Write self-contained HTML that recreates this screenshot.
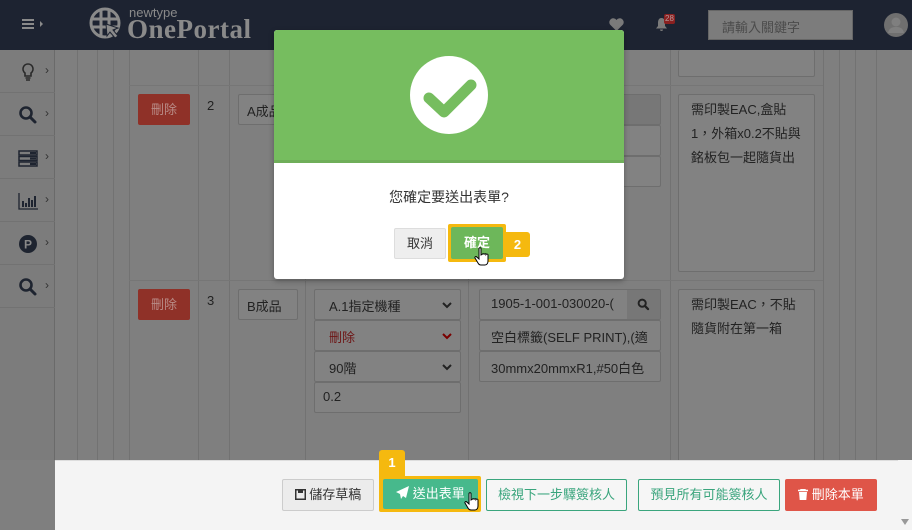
<!DOCTYPE html><html><head><meta charset="utf-8"><style>
*{box-sizing:border-box;margin:0;padding:0}
body{width:912px;height:530px;overflow:hidden;background:#7f7f7f;font-family:"Liberation Sans","Noto Sans CJK TC",sans-serif;font-size:13px;color:#222;position:relative}
.a{position:absolute}
.hdr{left:0;top:0;width:912px;height:50px;background:#1d2331}
.vl{position:absolute;top:50px;height:410px;width:1px;background:#727272}
.hl{position:absolute;height:1px;background:#767676}
.box{position:absolute;border:1px solid #6e6e6e;background:#828282;border-radius:2px;color:#222;padding:6px 8px;white-space:nowrap;overflow:hidden;font-size:13px}
.red{position:absolute;background:#8f3128;color:#b98c87;border-radius:2px;text-align:center;line-height:31px;font-size:13px}
.side{position:absolute;left:0;width:55px;height:43px;border-bottom:1px solid #727272}
.side svg{position:absolute;left:18px;top:12px}
.side .ch{position:absolute;left:45px;top:13px;color:#333;font-size:12px}
.btn{position:absolute;border-radius:2px;text-align:center;font-size:13px}
.cv{position:absolute;right:8px;top:11px}
</style></head><body>
<div class="a hdr"></div>
<div class="a" style="left:22px;top:19px;width:12px;height:2px;background:#8a8a8a;box-shadow:0 4px #8a8a8a,0 8px #8a8a8a"></div>
<div class="a" style="left:40px;top:21px;border-left:3px solid #8a8a8a;border-top:3px solid transparent;border-bottom:3px solid transparent"></div>
<svg class="a" style="left:89px;top:7px" width="36" height="36" viewBox="0 0 36 36"><circle cx="16" cy="16" r="14" fill="none" stroke="#8a8a8a" stroke-width="3"/><path d="M2 12h28M2 20h28M12 3v26M20 3v26" stroke="#8a8a8a" stroke-width="3"/><path d="M17 17l12 4-5 2 5 6-3 2-5-6-3 4z" fill="#8a8a8a" stroke="#1d2331" stroke-width="1"/></svg>
<div class="a" style="left:129px;top:5px;color:#8a8a8a;font-size:13px">newtype</div>
<div class="a" style="left:127px;top:14px;color:#8a8a8a;font-size:27px;font-weight:bold;font-family:'Liberation Serif',serif;letter-spacing:0.5px">OnePortal</div>
<svg class="a" style="left:609px;top:18px" width="15" height="13" viewBox="0 0 15 13"><path d="M7.5 13L1 6.5A3.6 3.6 0 0 1 7.5 2a3.6 3.6 0 0 1 6.5 4.5z" fill="#7a7a7a"/></svg>
<svg class="a" style="left:655px;top:17px" width="13" height="15" viewBox="0 0 13 15"><path d="M6.5 1C3.5 1 3 4 3 6v3L1 11.5h11L10 9V6c0-2-.5-5-3.5-5zM5 12.5a1.5 1.5 0 0 0 3 0z" fill="#7a7a7a"/></svg>
<div class="a" style="left:664px;top:14px;background:#8a2020;color:#b89a9a;font-size:8px;padding:0 1px;border-radius:2px;line-height:10px">28</div>
<div class="a" style="left:708px;top:10px;width:145px;height:30px;background:#7c7c7c;border:1px solid #666;color:#4b4b4b;padding:6px 13px;font-size:13px">請輸入關鍵字</div>
<svg class="a" style="left:884px;top:13px" width="24" height="24" viewBox="0 0 24 24"><circle cx="12" cy="12" r="12" fill="#6f6f6f"/><circle cx="12" cy="9" r="4.5" fill="#7f7f7f"/><path d="M4 20c1-5 4-6 8-6s7 1 8 6z" fill="#7f7f7f"/></svg>
<div class="a" style="left:0;top:50px;width:55px;height:410px;background:#7c7c7c;border-right:1px solid #6a6a6a"></div>
<div class="side" style="top:50px"><svg width="20" height="20" viewBox="0 0 20 20"><path d="M10 2a5 5 0 0 0-3 9v3h6v-3a5 5 0 0 0-3-9z" fill="none" stroke="#2a2a2a" stroke-width="1.6"/><path d="M7.5 16h5M8 18h4" stroke="#2a2a2a" stroke-width="1.6"/></svg><span class="ch">›</span></div>
<div class="side" style="top:93px"><svg width="20" height="20" viewBox="0 0 20 20"><circle cx="8" cy="8" r="5.5" fill="none" stroke="#1e2430" stroke-width="2.6"/><path d="M12 12l5 5" stroke="#1e2430" stroke-width="3" stroke-linecap="round"/></svg><span class="ch">›</span></div>
<div class="side" style="top:136px"><svg width="20" height="20" viewBox="0 0 20 20"><rect x="1" y="3" width="18" height="4" fill="none" stroke="#1e2430" stroke-width="1.5"/><rect x="1" y="8.5" width="18" height="4" fill="none" stroke="#1e2430" stroke-width="1.5"/><rect x="1" y="14" width="18" height="4" fill="none" stroke="#1e2430" stroke-width="1.5"/><path d="M12 5h6M12 10.5h6M12 16h6" stroke="#1e2430" stroke-width="2"/></svg><span class="ch">›</span></div>
<div class="side" style="top:179px"><svg width="20" height="20" viewBox="0 0 20 20"><path d="M1 2v16h19" fill="none" stroke="#1e2430" stroke-width="1.3"/><path d="M5 10v6M8 12v4M11 7v9M14 9v7M17 5v11" stroke="#1e2430" stroke-width="2"/></svg><span class="ch">›</span></div>
<div class="side" style="top:222px"><svg width="20" height="20" viewBox="0 0 20 20"><circle cx="10" cy="10" r="9" fill="#1e2430"/><text x="10" y="14.5" font-size="12" font-weight="bold" fill="#888" text-anchor="middle" font-family="Liberation Sans">P</text></svg><span class="ch">›</span></div>
<div class="side" style="top:265px"><svg width="20" height="20" viewBox="0 0 20 20"><circle cx="8" cy="8" r="5.5" fill="none" stroke="#1e2430" stroke-width="2.6"/><path d="M12 12l5 5" stroke="#1e2430" stroke-width="3" stroke-linecap="round"/></svg><span class="ch">›</span></div>
<div class="vl" style="left:77px"></div><div class="vl" style="left:97px"></div><div class="vl" style="left:113px"></div><div class="vl" style="left:129px"></div><div class="vl" style="left:198px"></div><div class="vl" style="left:229px"></div><div class="vl" style="left:305px"></div><div class="vl" style="left:468px"></div><div class="vl" style="left:670px"></div><div class="vl" style="left:823px"></div><div class="vl" style="left:839px"></div><div class="vl" style="left:855px"></div><div class="vl" style="left:876px"></div>
<div class="hl" style="left:129px;top:85px;width:694px"></div>
<div class="hl" style="left:129px;top:280px;width:694px"></div>
<div class="box" style="left:678px;top:50px;width:137px;height:27px;border-top:none"></div>
<div class="red" style="left:138px;top:94px;width:52px;height:31px">刪除</div>
<div class="a" style="left:207px;top:98px;font-size:13px;color:#222">2</div>
<div class="box" style="left:238px;top:94px;width:60px;height:31px">A成品</div>
<div class="box" style="left:479px;top:94px;width:182px;height:31px;background:#777"></div>
<div class="box" style="left:479px;top:125px;width:182px;height:31px"></div>
<div class="box" style="left:479px;top:156px;width:182px;height:31px"></div>
<div class="box" style="left:678px;top:94px;width:137px;height:178px;white-space:normal;line-height:24px;padding:3px 12px">需印製EAC,盒貼1，外箱x0.2不貼與銘板包一起隨貨出</div>
<div class="red" style="left:138px;top:289px;width:52px;height:31px">刪除</div>
<div class="a" style="left:207px;top:293px;color:#222">3</div>
<div class="box" style="left:238px;top:289px;width:60px;height:31px">B成品</div>
<div class="box" style="left:314px;top:289px;width:147px;height:31px;padding-left:14px">A.1指定機種<svg class="cv" width="10" height="8"><path d="M1 2l4 4 4-4" fill="none" stroke="#222" stroke-width="2"/></svg></div>
<div class="box" style="left:314px;top:320px;width:147px;height:31px;padding-left:14px;color:#6e1515">刪除<svg class="cv" width="10" height="8"><path d="M1 2l4 4 4-4" fill="none" stroke="#7a0000" stroke-width="2"/></svg></div>
<div class="box" style="left:314px;top:351px;width:147px;height:31px;padding-left:14px">90階<svg class="cv" width="10" height="8"><path d="M1 2l4 4 4-4" fill="none" stroke="#222" stroke-width="2"/></svg></div>
<div class="box" style="left:314px;top:382px;width:147px;height:31px">0.2</div>
<div class="box" style="left:479px;top:289px;width:182px;height:31px;padding-left:11px">1905-1-001-030020-(<span class="a" style="right:0;top:0;width:33px;height:31px;background:#777"><svg class="a" style="left:10px;top:8px" width="13" height="13" viewBox="0 0 20 20"><circle cx="8" cy="8" r="5.5" fill="none" stroke="#222" stroke-width="3"/><path d="M12 12l5 5" stroke="#222" stroke-width="3.5" stroke-linecap="round"/></svg></span></div>
<div class="box" style="left:479px;top:320px;width:182px;height:31px;padding-left:11px">空白標籤(SELF PRINT),(適</div>
<div class="box" style="left:479px;top:351px;width:182px;height:31px;padding-left:11px">30mmx20mmxR1,#50白色</div>
<div class="box" style="left:678px;top:289px;width:137px;height:180px;white-space:normal;line-height:24px;padding:3px 12px">需印製EAC，不貼隨貨附在第一箱</div>
<div class="a" style="left:55px;top:460px;width:843px;height:70px;background:#f4f4f4;border-top:1px solid #ddd"></div>
<div class="a" style="left:898px;top:460px;width:14px;height:70px;background:#f4f4f4"></div>
<div class="a" style="left:901px;top:519px;border-top:6px solid #999;border-left:4px solid transparent;border-right:4px solid transparent"></div>
<div class="btn" style="left:282px;top:479px;width:92px;height:32px;background:#ececec;border:1px solid #ccc;line-height:30px;color:#333"><svg width="11" height="11" viewBox="0 0 11 11" style="vertical-align:-1px"><rect x="0.75" y="0.75" width="9.5" height="9.5" fill="none" stroke="#333" stroke-width="1.5"/><rect x="3" y="1" width="5" height="3" fill="#333"/></svg> 儲存草稿</div>
<div class="a" style="left:379px;top:450px;width:26px;height:28px;background:#f5b90f;border-radius:3px 3px 0 0;color:#fff;font-weight:bold;text-align:center;line-height:26px;font-size:13px">1</div>
<div class="a" style="left:379px;top:476px;width:102px;height:36px;background:#f5b90f;border-radius:2px"></div>
<div class="btn" style="left:383px;top:479px;width:95px;height:30px;background:#47b98c;color:#fff;line-height:30px"><svg width="13" height="13" viewBox="0 0 13 13" style="vertical-align:-1px"><path d="M13 0L0 6l4 2 1 5 2-3 3 2z" fill="#fff"/></svg> 送出表單</div>
<div class="btn" style="left:486px;top:479px;width:141px;height:32px;border:1px solid #3aa57d;color:#3aa57d;line-height:30px;background:#f6f6f6">檢視下一步驛簽核人</div>
<div class="btn" style="left:638px;top:479px;width:142px;height:32px;border:1px solid #3aa57d;color:#3aa57d;line-height:30px;background:#f6f6f6">預見所有可能簽核人</div>
<div class="btn" style="left:785px;top:479px;width:92px;height:32px;background:#df5548;color:#fff;line-height:32px"><svg width="10" height="11" viewBox="0 0 10 11" style="vertical-align:-1px"><path d="M0 1.5h10M3 1.5V0h4v1.5" stroke="#fff" stroke-width="1.4" fill="none"/><path d="M1 3h8l-.7 8H1.7z" fill="#fff"/></svg> 刪除本單</div>
<svg class="a" style="left:464px;top:492px" width="16" height="20" viewBox="0 0 16 20"><path d="M5 1.5c0-1 2-1 2 0V8l1-.5c.5-1 2-1 2 0 .5-1 2-1 2 0 .5-.8 2-.5 2 .5V14c0 2-1 4-3 4H7c-1.5 0-2.5-1-3-2L1 11c-.5-1 .8-2 1.8-1L5 12z" fill="#fff" stroke="#000" stroke-width="1"/></svg>
<div class="a" style="left:274px;top:30px;width:350px;height:249px;background:#fff;border-radius:3px;overflow:hidden;box-shadow:0 2px 6px rgba(0,0,0,.3)">
<div class="a" style="left:0;top:0;width:350px;height:133px;background:#76bd5f;border-bottom:3px solid #6fae59"></div>
<svg class="a" style="left:136px;top:26px" width="78" height="78"><circle cx="39" cy="39" r="39" fill="#fff"/><path d="M19 42l15 14 27-27" fill="none" stroke="#76bd5f" stroke-width="11" stroke-linecap="round" stroke-linejoin="round"/></svg>
<div class="a" style="left:0;top:157px;width:350px;text-align:center;font-size:14px;color:#333">您確定要送出表單?</div>
<div class="btn" style="left:120px;top:198px;width:52px;height:31px;background:#eee;border:1px solid #ddd;line-height:29px;color:#333">取消</div>
<div class="a" style="left:174px;top:194px;width:58px;height:38px;background:#f5b90f;border-radius:2px"></div>
<div class="btn" style="left:177px;top:197px;width:52px;height:32px;background:#6db75a;color:#fff;line-height:32px;font-weight:bold">確定</div>
<div class="a" style="left:231px;top:202px;width:25px;height:25px;background:#f5b90f;border-radius:0 3px 3px 0;color:#fff;font-weight:bold;text-align:center;line-height:25px">2</div>
<svg class="a" style="left:200px;top:217px" width="16" height="20" viewBox="0 0 16 20"><path d="M5 1.5c0-1 2-1 2 0V8l1-.5c.5-1 2-1 2 0 .5-1 2-1 2 0 .5-.8 2-.5 2 .5V14c0 2-1 4-3 4H7c-1.5 0-2.5-1-3-2L1 11c-.5-1 .8-2 1.8-1L5 12z" fill="#fff" stroke="#000" stroke-width="1"/></svg>
</div>
</body></html>
